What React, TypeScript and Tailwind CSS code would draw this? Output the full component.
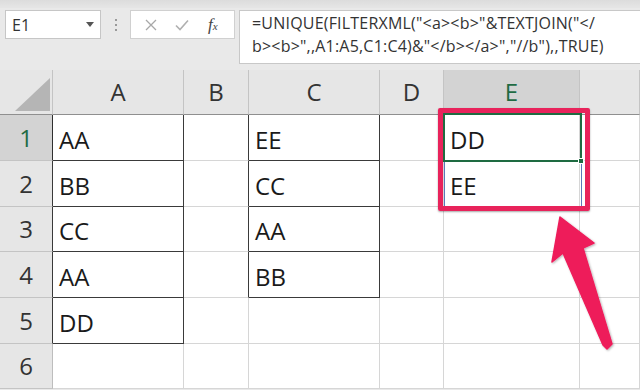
import React from "react";

const colW = [53, 131, 65, 131, 64, 136, 60];
const rowH = [46, 46, 45, 46, 46, 45];
const A = ["AA", "BB", "CC", "AA", "DD", ""];
const C = ["EE", "CC", "AA", "BB", "", ""];
const E = ["DD", "EE", "", "", "", ""];

function isData(col: number, row: number) {
  if (col === 1) return row < 5;
  if (col === 3) return row < 4;
  return false;
}

export default function App() {
  return (
    <div
      className="relative w-[640px] h-[390px] overflow-hidden bg-[#e9e9e9]"
      style={{ fontFamily: '"Open Sans", "Liberation Sans", sans-serif' }}
    >
      {/* top strip */}
      <div className="h-[8px] bg-gradient-to-b from-[#dcdcdc] to-[#e6e6e6]" />
      {/* toolbar */}
      <div className="flex items-start h-[62px] pt-[2px]">
        <div className="ml-[5px] w-[96px] h-[29px] bg-white border border-[#c6c6c6] flex items-center justify-between pl-[6px] pr-[6px]">
          <span className="text-[16px] text-[#333] leading-none">E1</span>
          <svg width="8" height="5" viewBox="0 0 8 5">
            <path d="M0 0 L8 0 L4 5 Z" fill="#555" />
          </svg>
        </div>
        <div className="w-[29px] h-[29px] flex flex-col items-center justify-center gap-[3px]">
          <div className="w-[2px] h-[2px] bg-[#9a9a9a]" />
          <div className="w-[2px] h-[2px] bg-[#9a9a9a]" />
          <div className="w-[2px] h-[2px] bg-[#9a9a9a]" />
        </div>
        <div className="w-[105px] h-[29px] bg-white border border-[#d0d0d0] flex items-center">
          <svg className="ml-[14px]" width="12" height="12" viewBox="0 0 12 12">
            <path d="M1 1 L11 11 M11 1 L1 11" stroke="#a8a8a8" strokeWidth="1.3" />
          </svg>
          <svg className="ml-[18px]" width="14" height="12" viewBox="0 0 14 12">
            <path d="M1 6.5 L5 10.5 L13 1.5" stroke="#b0b0b0" strokeWidth="1.6" fill="none" />
          </svg>
          <span
            className="ml-[19px] text-[17px] italic text-[#444] leading-none"
            style={{ fontFamily: '"Liberation Serif", serif' }}
          >
            f<span className="text-[11px]">x</span>
          </span>
        </div>
        <div className="ml-[4px] flex-1 h-[54px] bg-white border border-[#c8c8c8] border-r-0 pl-[12px] pt-[1px] text-[16px] tracking-[0.2px] leading-[23px] text-[#333] whitespace-nowrap">
          <div>=UNIQUE(FILTERXML("&lt;a&gt;&lt;b&gt;"&amp;TEXTJOIN("&lt;/</div>
          <div>b&gt;&lt;b&gt;",,A1:A5,C1:C4)&amp;"&lt;/b&gt;&lt;/a&gt;","//b"),,TRUE)</div>
        </div>
      </div>

      {/* header row */}
      <div className="flex h-[45px]">
        <div className="relative w-[53px] h-full border-r border-b border-r-[#c4c4c4] border-b-[#8f8f8f] bg-[#e6e6e6]">
          <svg className="absolute left-[15px] top-[8px]" width="36" height="34" viewBox="0 0 36 34">
            <path d="M0 33 L35 0 L35 33 Z" fill="#b5b5b5" />
          </svg>
        </div>
        {["A", "B", "C", "D", "E", ""].map((h, i) => {
          const sel = h === "E";
          return (
            <div
              key={i}
              className={
                "flex items-center justify-center h-full border-r border-b text-[24px] " +
                (sel
                  ? "bg-[#d3d3d3] text-[#1f6b43] border-r-[#c4c4c4] border-b-[#8f8f8f]"
                  : "bg-[#e6e6e6] text-[#333] border-r-[#c4c4c4] border-b-[#8f8f8f]")
              }
              style={{ width: i === 5 ? undefined : colW[i + 1], flex: i === 5 ? 1 : undefined }}
            >
              {h}
            </div>
          );
        })}
      </div>

      {/* rows */}
      {rowH.map((h, r) => (
        <div key={r} className="flex" style={{ height: h }}>
          <div
            className={
              "w-[53px] h-full flex items-center justify-center border-r border-b text-[24px] " +
              (r === 0
                ? "bg-[#d3d3d3] text-[#1f6b43] border-r-[#2f2f2f] border-b-[#c4c4c4]"
                : r < 5
                ? "bg-[#e6e6e6] text-[#333] border-r-[#3a3a3a] border-b-[#c4c4c4]"
                : "bg-[#e6e6e6] text-[#333] border-r-[#bdbdbd] border-b-[#c4c4c4]")
            }
          >
            {r + 1}
          </div>
          {[1, 2, 3, 4, 5, 6].map((c) => {
            const darkR = isData(c, r) || isData(c + 1, r);
            const darkB = isData(c, r) || isData(c, r + 1);
            const text = c === 1 ? A[r] : c === 3 ? C[r] : c === 5 ? E[r] : "";
            return (
              <div
                key={c}
                className={
                  "h-full bg-white border-r border-b flex items-end pl-[6px] pb-[4px] text-[24px] leading-[32px] text-[#1a1a1a] " +
                  (darkR ? "border-r-[#3a3a3a] " : "border-r-[#d6d6d6] ") +
                  (darkB ? "border-b-[#3a3a3a]" : "border-b-[#d6d6d6]")
                }
                style={{ width: c === 6 ? undefined : colW[c], flex: c === 6 ? 1 : undefined }}
              >
                {text}
              </div>
            );
          })}
        </div>
      ))}

      {/* E2 range border */}
      <div className="absolute left-[444px] top-[160px] w-[138px] h-[48px] border border-[#5a78b8]" />
      {/* E1 active cell */}
      <div className="absolute left-[443px] top-[113px] w-[139px] h-[49px] border-2 border-[#1e6b41]" />
      <div className="absolute left-[578px] top-[158px] w-[6px] h-[6px] bg-[#1e6b41] border border-white" />
      {/* red highlight box */}
      <div className="absolute left-[438px] top-[108px] w-[152px] h-[103px] border-[5px] border-[#e8235b] rounded-[2px] shadow-[0_1px_2px_rgba(0,0,0,0.35)]" />
      {/* arrow */}
      <svg className="absolute left-0 top-0" width="640" height="390" viewBox="0 0 640 390">
        <defs>
          <filter id="sh" x="-20%" y="-20%" width="140%" height="140%">
            <feDropShadow dx="1" dy="1" stdDeviation="1" floodColor="#000" floodOpacity="0.3" />
          </filter>
        </defs>
        <path
          d="M560 217 L594 243 L583 248 L612 344 L607 349 L603 345 L563 253 L552 262 Z"
          fill="#ee1b5a"
          stroke="#ee1b5a"
          strokeWidth="1.5"
          strokeLinejoin="round"
          filter="url(#sh)"
        />
      </svg>
    </div>
  );
}
